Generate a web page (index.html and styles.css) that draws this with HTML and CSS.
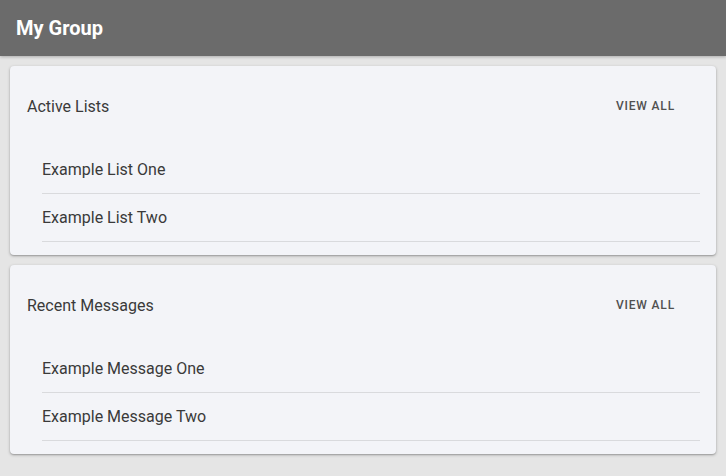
FILE: index.html
```html
<!DOCTYPE html>
<html>
<head>
<meta charset="utf-8">
<link rel="stylesheet" href="styles.css">
</head>
<body>
<header class="toolbar"><h1 class="toolbar-title">My Group</h1></header>
<main class="content">
  <section class="card">
    <div class="card-header">
      <h2 class="card-title">Active Lists</h2>
      <button class="btn">VIEW ALL</button>
    </div>
    <ul class="list">
      <li class="list-item">Example List One</li>
      <li class="list-item">Example List Two</li>
    </ul>
  </section>
  <section class="card">
    <div class="card-header">
      <h2 class="card-title">Recent Messages</h2>
      <button class="btn">VIEW ALL</button>
    </div>
    <ul class="list">
      <li class="list-item">Example Message One</li>
      <li class="list-item">Example Message Two</li>
    </ul>
  </section>
</main>
</body>
</html>
```
FILE: styles.css
```css
* { box-sizing: border-box; }
html, body { margin: 0; padding: 0; }
body {
  background: #e5e5e5;
  font-family: Roboto, "Liberation Sans", sans-serif;
  color: #3a3a3a;
  height: 476px;
  overflow: hidden;
}
.toolbar {
  height: 56px;
  background: #6b6b6b;
  display: flex;
  align-items: center;
  padding: 0 16px;
  box-shadow: 0 1px 3px rgba(0,0,0,0.25);
}
.toolbar-title {
  margin: 0;
  color: #fff;
  font-size: 20px;
  font-weight: 700;
  padding-bottom: 1px;
}
.content {
  padding: 10px;
  display: flex;
  flex-direction: column;
  gap: 10px;
}
.card {
  background: #f3f4f8;
  border-radius: 4px;
  box-shadow: 0 1px 3px rgba(0,0,0,0.3), 0 1px 1px rgba(0,0,0,0.1);
  padding: 0 16px 13px 16px;
}
.card-header {
  height: 80px;
  display: flex;
  align-items: center;
  justify-content: space-between;
  padding-left: 1px;
  padding-top: 1px;
}
.card-title {
  margin: 0;
  font-size: 16px;
  font-weight: 400;
  color: #3a3a3a;
}
.btn {
  border: none;
  background: none;
  font-family: Roboto, "Liberation Sans", sans-serif;
  font-size: 12px;
  font-weight: 500;
  letter-spacing: 0.07em;
  color: #505050;
  padding: 0 16px 1px 17px;
  margin-right: 9px;
  height: 36px;
}
.list {
  list-style: none;
  margin: 0;
  padding: 0 0 0 16px;
}
.list-item {
  height: 48px;
  display: flex;
  align-items: center;
  font-size: 16px;
  color: #3a3a3a;
  border-bottom: 1px solid #d9dadd;
}
```
